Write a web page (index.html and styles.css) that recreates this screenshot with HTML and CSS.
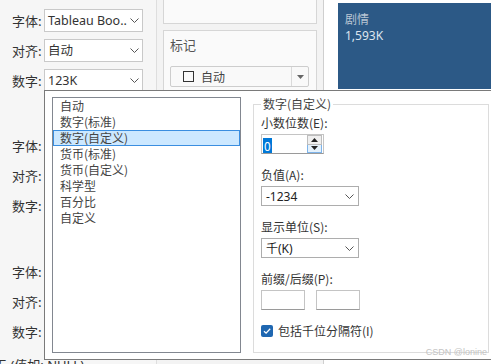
FILE: index.html
```html
<!DOCTYPE html>
<html lang="zh">
<head>
    <meta charset="UTF-8">
    <title>数字格式</title>
    <link rel="stylesheet" href="styles.css">
</head>
<body>

    <div class="app">
        <!-- Format pane -->
        <aside class="format-pane">
            <div class="field-group">
                <div class="field">
                    <span class="field-label">字体:</span>
                    <div class="select">Tableau Boo..<svg class="chevron" width="9" height="5" viewBox="0 0 9 5"><path d="M0.5 0.5 L4.5 4.5 L8.5 0.5" fill="none" stroke="#555" stroke-width="1"/></svg></div>
                </div>
                <div class="field">
                    <span class="field-label">对齐:</span>
                    <div class="select">自动<svg class="chevron" width="9" height="5" viewBox="0 0 9 5"><path d="M0.5 0.5 L4.5 4.5 L8.5 0.5" fill="none" stroke="#555" stroke-width="1"/></svg></div>
                </div>
                <div class="field">
                    <span class="field-label">数字:</span>
                    <div class="select">123K<svg class="chevron" width="9" height="5" viewBox="0 0 9 5"><path d="M0.5 0.5 L4.5 4.5 L8.5 0.5" fill="none" stroke="#555" stroke-width="1"/></svg></div>
                </div>
            </div>

            <div class="field-group second">
                <div class="field"><span class="field-label">字体:</span></div>
                <div class="field"><span class="field-label">对齐:</span></div>
                <div class="field"><span class="field-label">数字:</span></div>
            </div>

            <div class="field-group third">
                <div class="field"><span class="field-label">字体:</span></div>
                <div class="field"><span class="field-label">对齐:</span></div>
                <div class="field"><span class="field-label">数字:</span></div>
            </div>

            <div class="null-text">无 (值如: NULL)</div>
        </aside>

        <!-- Cards -->
        <section class="cards-pane">
            <div class="card card-top"></div>
            <div class="card card-marks">
                <div class="card-title">标记</div>
                <div class="mark-type">
                    <span class="mark-box"></span>
                    <span class="mark-name">自动</span>
                    <span class="mark-arrow">
                        <svg width="7" height="4" viewBox="0 0 7 4"><path d="M0 0 H7 L3.5 4 Z" fill="#666"/></svg>
                    </span>
                </div>
            </div>
        </section>

        <!-- View -->
        <main class="view">
            <div class="mark-tile">
                <div class="tile-label">剧情</div>
                <div class="tile-value">1,593K</div>
            </div>
            <div class="mark-tile"></div>
        </main>
    </div>

    <!-- Number format popup -->
    <div class="format-popup">
        <ul class="format-list">
            <li>自动</li>
            <li>数字(标准)</li>
            <li class="selected">数字(自定义)</li>
            <li>货币(标准)</li>
            <li>货币(自定义)</li>
            <li>科学型</li>
            <li>百分比</li>
            <li>自定义</li>
        </ul>

        <fieldset class="format-options">
            <legend>数字(自定义)</legend>

            <div class="opt-label">小数位数(E):</div>
            <div class="spinner">
                <div class="spinner-value"><span class="sel">0</span></div>
                <div class="spinner-buttons">
                    <span class="spin-btn"><svg width="7" height="4" viewBox="0 0 7 4"><path d="M0 4 H7 L3.5 0 Z" fill="#222"/></svg></span>
                    <span class="spin-btn hover"><svg width="7" height="4" viewBox="0 0 7 4"><path d="M0 0 H7 L3.5 4 Z" fill="#222"/></svg></span>
                </div>
            </div>

            <div class="opt-label">负值(A):</div>
            <div class="dlg-select">-1234<svg class="chevron" width="9" height="5" viewBox="0 0 9 5"><path d="M0.5 0.5 L4.5 4.5 L8.5 0.5" fill="none" stroke="#555" stroke-width="1"/></svg></div>

            <div class="opt-label">显示单位(S):</div>
            <div class="dlg-select">千(K)<svg class="chevron" width="9" height="5" viewBox="0 0 9 5"><path d="M0.5 0.5 L4.5 4.5 L8.5 0.5" fill="none" stroke="#555" stroke-width="1"/></svg></div>

            <div class="opt-label">前缀/后缀(P):</div>
            <div class="affix-row">
                <div class="affix-input"></div>
                <div class="affix-input"></div>
            </div>

            <label class="check-row">
                <span class="check">
                    <svg width="12" height="12" viewBox="0 0 12 12"><path d="M3 6.2 L5.1 8.2 L9.2 3.8" fill="none" stroke="#fff" stroke-width="1.3"/></svg>
                </span>
                包括千位分隔符(I)
            </label>
        </fieldset>
    </div>

    <div class="watermark">CSDN @lonine</div>

</body>
</html>
```

FILE: styles.css
```css
/* General styles */
body {
    margin: 0;
    padding: 0;
    width: 491px;
    height: 364px;
    overflow: hidden;
    position: relative;
    font-family: 'Noto Sans', 'Noto Sans CJK SC', sans-serif;
    color: #333;
    background-color: #f5f5f5;
}

.app {
    display: flex;
    height: 364px;
}

/* Format pane (left) */
.format-pane {
    width: 157px;
    padding-top: 9px;
    background-color: #f6f6f6;
    box-sizing: border-box;
    border-right: 1px solid #dedede;
}

.field-group.second {
    margin-top: 43px;
}

.field-group.third {
    margin-top: 44px;
}

.field {
    display: flex;
    align-items: center;
    height: 22px;
    margin-bottom: 8px;
}

.field-label {
    width: 44px;
    padding-left: 12px;
    box-sizing: border-box;
    font-size: 13px;
    font-family: 'Noto Sans CJK SC', sans-serif;
    color: #333;
}

.select {
    width: 99px;
    height: 23px;
    box-sizing: border-box;
    border: 1px solid #c9c9c9;
    background-color: #fff;
    padding-left: 3px;
    font-size: 12.5px;
    line-height: 21px;
    white-space: nowrap;
    display: flex;
    align-items: center;
    color: #333;
}

.select .chevron {
    margin-left: auto;
    margin-right: 3px;
    flex-shrink: 0;
}

.null-text {
    margin-top: 15px;
    margin-left: -6px;
    font-size: 13px;
    white-space: nowrap;
    line-height: 16px;
}

/* Cards pane (middle) */
.cards-pane {
    width: 167px;
    padding: 0 6px;
    box-sizing: border-box;
    background-color: #f3f3f3;
    border-right: 1px solid #cfcfcf;
}

.card {
    background-color: #fafafa;
    border: 1px solid #d6d6d6;
}

.card-top {
    height: 26px;
    margin-top: -2px;
    box-sizing: border-box;
}

.card-marks {
    margin-top: 6px;
    padding: 6px 6px 20px 6px;
}

.card-title {
    font-size: 13px;
    line-height: 16px;
    color: #555;
    font-family: 'Noto Sans CJK SC', sans-serif;
}

.mark-type {
    margin-top: 13px;
    width: 139px;
    height: 21px;
    box-sizing: border-box;
    border: 1px solid #cdcdcd;
    border-radius: 2px;
    background-color: #f9f9f9;
    display: flex;
    align-items: center;
}

.mark-box {
    width: 11px;
    height: 11px;
    box-sizing: border-box;
    border: 1px solid #333;
    margin-left: 12px;
}

.mark-name {
    margin-left: 7px;
    font-size: 12px;
    color: #444;
    font-family: 'Noto Sans CJK SC', sans-serif;
}

.mark-arrow {
    margin-left: auto;
    width: 16px;
    height: 19px;
    border-left: 1px solid #dadada;
    display: flex;
    align-items: center;
    justify-content: center;
}

/* View (right) */
.view {
    flex: 1;
    background-color: #fff;
    padding: 3px 0 0 14px;
}

.mark-tile {
    height: 86px;
    background-color: #2c5986;
    padding: 7px 7px;
    box-sizing: border-box;
    margin-bottom: 4px;
}

.tile-label {
    font-size: 12px;
    line-height: 17px;
    color: #b9c6d4;
    font-family: 'Noto Sans CJK SC', sans-serif;
}

.tile-value {
    font-size: 12px;
    line-height: 17px;
    color: #dde5ee;
}

/* Number format popup */
.format-popup {
    position: absolute;
    left: 44px;
    top: 90px;
    width: 470px;
    height: 270px;
    box-sizing: border-box;
    border: 1px solid #7a7a7a;
    background-color: #fff;
    padding: 6px 0 6px 7px;
    display: flex;
    gap: 12px;
    font-family: 'Noto Sans CJK SC', sans-serif;
    font-size: 12px;
    color: #333;
}

.format-list {
    list-style: none;
    margin: 0;
    padding: 0;
    width: 189px;
    box-sizing: border-box;
    border: 1px solid #828790;
}

.format-list li {
    height: 16px;
    line-height: 16px;
    padding-left: 7px;
    box-sizing: border-box;
    color: #444;
}

.format-list li.selected {
    background-color: #cce8ff;
    border: 1px solid #3a8ee0;
    line-height: 14px;
    padding-left: 6px;
}

.format-options {
    width: 236px;
    margin: 0;
    padding: 4px 7px 0 7px;
    box-sizing: border-box;
    border: 1px solid #dcdcdc;
    min-width: 0;
}

.format-options legend {
    padding: 0 2px;
    font-size: 12px;
    line-height: 14px;
    color: #444;
}

.opt-label {
    font-size: 12px;
    line-height: 16px;
    color: #333;
    margin-top: 13px;
}

.opt-label:first-of-type {
    margin-top: 0;
}

.spinner {
    margin-top: 3px;
    width: 63px;
    height: 20px;
    box-sizing: border-box;
    border: 1px solid #c4c4c4;
    border-bottom-color: #9a9a9a;
    display: flex;
}

.spinner-value {
    flex: 1;
    padding: 2px 0 0 1px;
}

.spinner-value .sel {
    display: inline-block;
    background-color: #0078d7;
    color: #fff;
    font-size: 12px;
    line-height: 15px;
    padding: 0 1px;
}

.spinner-buttons {
    width: 15px;
    display: flex;
    flex-direction: column;
    margin: 0 1px 0 0;
}

.spin-btn {
    flex: 1;
    display: flex;
    align-items: center;
    justify-content: center;
    background-color: #efefef;
    border: 1px solid #bdbdbd;
}

.spin-btn.hover {
    background-color: #e5f1fb;
    border-color: #7eb4ea;
    border-top: none;
}

.dlg-select {
    margin-top: 3px;
    width: 98px;
    height: 20px;
    box-sizing: border-box;
    border: 1px solid #adadad;
    background-color: #fff;
    padding-left: 4px;
    display: flex;
    align-items: center;
    font-family: 'Noto Sans', 'Noto Sans CJK SC', sans-serif;
    font-size: 12px;
    color: #222;
}

.dlg-select .chevron {
    margin-left: auto;
    margin-right: 4px;
}

.affix-row {
    margin-top: 3px;
    display: flex;
    gap: 11px;
}

.affix-input {
    width: 44px;
    height: 20px;
    box-sizing: border-box;
    border: 1px solid #c4c4c4;
    border-bottom-color: #9a9a9a;
}

.check-row {
    margin-top: 13px;
    display: flex;
    align-items: center;
    gap: 5px;
    font-size: 12px;
    line-height: 16px;
    color: #333;
}

.check {
    width: 12px;
    height: 12px;
    border-radius: 2px;
    background-color: #1f67b1;
    display: flex;
}

/* Watermark */
.watermark {
    position: absolute;
    right: 4px;
    top: 347px;
    font-family: 'Liberation Sans', sans-serif;
    font-size: 9px;
    color: #c4c4c4;
}
```
